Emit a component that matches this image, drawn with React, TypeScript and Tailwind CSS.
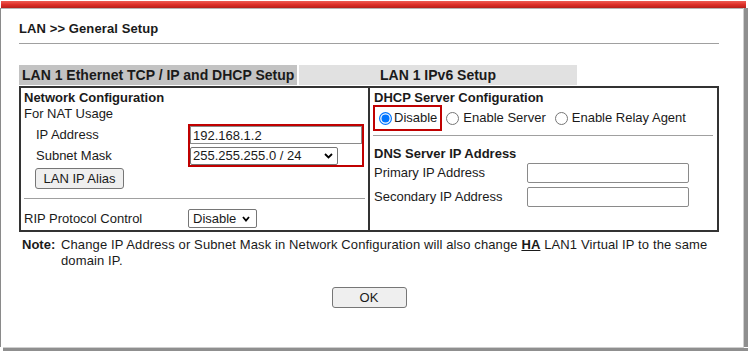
import React from "react";

function Chevron({ w = 9 }: { w?: number }) {
  return (
    <svg width={w} height={6} viewBox={`0 0 ${w} 6`} className="shrink-0">
      <path d={`M1 1 L${w / 2} ${4.5} L${w - 1} 1`} fill="none" stroke="#000" strokeWidth={1.8} />
    </svg>
  );
}

function Radio({ checked = false }: { checked?: boolean }) {
  return (
    <svg width={13} height={13} viewBox="0 0 13 13" className="shrink-0">
      {checked ? (
        <>
          <circle cx={6.5} cy={6.5} r={5.9} fill="#fff" stroke="#0075ff" strokeWidth={1.2} />
          <circle cx={6.5} cy={6.5} r={4} fill="#0075ff" />
        </>
      ) : (
        <circle cx={6.5} cy={6.5} r={6} fill="#fff" stroke="#767676" strokeWidth={1} />
      )}
    </svg>
  );
}

export default function App() {
  return (
    <div className="w-[748px] h-[351px] bg-white flex flex-col font-['Liberation_Sans',Arial,sans-serif] text-[13px] text-[#1a1a1a] overflow-hidden">
      <div className="h-[1px]" />
      <div className="flex h-[7px]">
        <div className="w-[1px]" />
        <div className="w-[745px] bg-gradient-to-b from-[#ec5a52] via-[#de2f28] to-[#b81f19]" />
      </div>
      <div className="flex flex-1 min-h-0">
        <div className="w-[1px] bg-[#8a8a8a]" />
        <div className="w-[742px] flex flex-col">
          <div className="h-[1px] bg-[#b4b4b4]" />
          <div className="pl-[18px] flex flex-col">
            <div className="mt-[12px] leading-[15px] h-[15px] font-bold tracking-[0.1px]">LAN &gt;&gt; General Setup</div>
            <div className="mt-[7px] h-[1px] w-[700px] bg-[#a0a0a0]" />
            {/* Tabs */}
            <div className="mt-[21px] h-[20px] flex text-[14px]">
              <div className="w-[278px] bg-[#c3c3c3] pl-[3px] leading-[20px] font-bold whitespace-nowrap">
                LAN 1 Ethernet TCP / IP and DHCP Setup
              </div>
              <div className="ml-[2px] w-[278px] bg-[#e1e1e1] leading-[20px] font-bold text-center">
                LAN 1 IPv6 Setup
              </div>
            </div>
            {/* Table */}
            <div className="mt-[1px] w-[700px] h-[146px] border border-[#333] flex">
              {/* Left cell */}
              <div className="w-[349px] border border-[#333] px-[3px] pt-[2px] flex flex-col">
                <div className="h-[16px] leading-[16px] font-bold">Network Configuration</div>
                <div className="h-[16px] leading-[16px]">For NAT Usage</div>
                <div className="mt-[2px] flex">
                  <div className="w-[164px] pl-[12px] pt-[2px] flex flex-col">
                    <div className="h-[18px] leading-[18px]">IP Address</div>
                    <div className="mt-[3px] h-[18px] leading-[18px]">Subnet Mask</div>
                  </div>
                  <div className="w-[176px] border-2 border-[#c00000] flex flex-col">
                    <input
                      readOnly
                      value="192.168.1.2"
                      className="h-[18px] w-full border border-[#8a8a8a] px-[2px] leading-[16px] text-[13px] outline-none bg-white"
                    />
                    <div className="mt-[3px] h-[18px] w-[148px] border border-[#767676] rounded-[2px] pl-[2px] pr-[4px] flex items-center justify-between bg-white">
                      <span className="leading-[16px]">255.255.255.0 / 24</span>
                      <Chevron />
                    </div>
                  </div>
                </div>
                <button className="mt-[1px] ml-[11px] w-[89px] h-[21px] bg-[#efefef] border border-[#767676] rounded-[3px] leading-[19px] text-[13px] text-[#1a1a1a]">
                  LAN IP Alias
                </button>
                <div className="mt-[9px] h-[1px] bg-[#a0a0a0]" />
                <div className="mt-[10px] h-[19px] flex items-center">
                  <div className="w-[164px]">RIP Protocol Control</div>
                  <div className="w-[69px] h-[19px] border border-[#767676] rounded-[2px] pl-[4px] pr-[6px] flex items-center justify-between bg-white">
                    <span className="leading-[17px]">Disable</span>
                    <Chevron w={8} />
                  </div>
                </div>
              </div>
              {/* Right cell */}
              <div className="w-[349px] border border-[#333] pl-[3px] pr-[4px] pt-[2px] flex flex-col">
                <div className="h-[15px] leading-[15px] font-bold pl-[1px]">DHCP Server Configuration</div>
                <div className="h-[26px] flex items-center whitespace-nowrap">
                  <div className="h-[26px] border-2 border-[#c00000] flex items-center pl-[4px] pr-[3px]">
                    <Radio checked />
                    <span className="ml-[2px]">Disable</span>
                  </div>
                  <span className="ml-[4px] flex"><Radio /></span>
                  <span className="ml-[4px]">Enable Server</span>
                  <span className="ml-[9px] flex"><Radio /></span>
                  <span className="ml-[4px]">Enable Relay Agent</span>
                </div>
                <div className="mt-[4px] h-[1px] bg-[#a0a0a0]" />
                <div className="mt-[10px] h-[16px] leading-[16px] font-bold pl-[1px]">DNS Server IP Address</div>
                <div className="mt-[1px] h-[20px] flex items-center">
                  <div className="w-[154px] pl-[1px]">Primary IP Address</div>
                  <input readOnly className="w-[162px] h-[20px] border border-[#8a8a8a] rounded-[2px] bg-white outline-none" />
                </div>
                <div className="mt-[4px] h-[20px] flex items-center">
                  <div className="w-[154px] pl-[1px]">Secondary IP Address</div>
                  <input readOnly className="w-[162px] h-[20px] border border-[#8a8a8a] rounded-[2px] bg-white outline-none" />
                </div>
              </div>
            </div>
            {/* Note */}
            <div className="mt-[5px] w-[700px] pl-[3px] flex leading-[16px]">
              <div className="w-[39px] shrink-0 font-bold">Note:</div>
              <div className="flex-1 tracking-[0.12px]">
                Change IP Address or Subnet Mask in Network Configuration will also change{" "}
                <span className="font-bold underline">HA</span> LAN1 Virtual IP to the same domain IP.
              </div>
            </div>
            <div className="w-[700px] flex justify-center">
              <button className="mt-[18px] w-[75px] h-[21px] bg-[#efefef] border border-[#767676] rounded-[3px] leading-[19px] text-[13px] text-[#1a1a1a]">
                OK
              </button>
            </div>
          </div>
        </div>
        <div className="w-[1px] bg-[#cfcfcf]" />
        <div className="w-[4px] bg-[#8f8f8f]" />
      </div>
      <div className="h-[1px] ml-[3px] w-[741px] bg-[#cfcfcf]" />
      <div className="h-[3px] ml-[3px] bg-[#8f8f8f]" />
    </div>
  );
}
